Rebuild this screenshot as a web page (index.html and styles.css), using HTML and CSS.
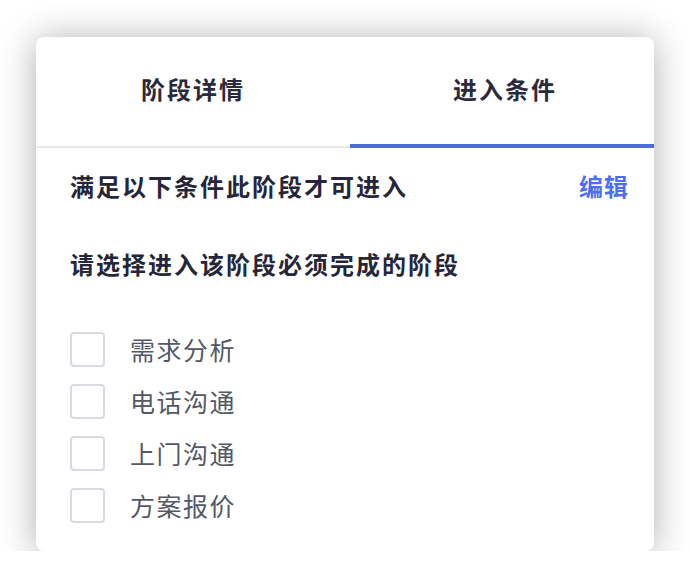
FILE: index.html
```html
<!DOCTYPE html>
<html lang="zh-CN">
<head>
    <meta charset="UTF-8">
    <meta name="viewport" content="width=device-width, initial-scale=1.0">
    <title>进入条件</title>
    <link rel="stylesheet" href="styles.css">
</head>
<body>
    <div class="card">
        <div class="tabs">
            <div class="tab">阶段详情</div>
            <div class="tab active">进入条件</div>
        </div>
        <div class="content">
            <div class="row-head">
                <span class="title">满足以下条件此阶段才可进入</span>
                <a class="edit">编辑</a>
            </div>
            <div class="subtitle">请选择进入该阶段必须完成的阶段</div>
            <ul class="stage-list">
                <li><span class="check"></span>需求分析</li>
                <li><span class="check"></span>电话沟通</li>
                <li><span class="check"></span>上门沟通</li>
                <li><span class="check"></span>方案报价</li>
            </ul>
        </div>
    </div>
</body>
</html>
```

FILE: styles.css
```css
body {
    margin: 0;
    background: #fff;
    font-family: "Noto Sans CJK SC", "Noto Sans", sans-serif;
}
.card {
    width: 618px;
    margin: 37px 0 0 36px;
    background: #fff;
    border-radius: 8px;
    box-shadow: 0 2px 36px rgba(0, 0, 0, 0.32);
    overflow: hidden;
}
.tabs {
    display: flex;
    align-items: flex-end;
    height: 111px;
}
.tab {
    width: 314px;
    height: 109px;
    line-height: 104px;
    text-align: center;
    font-size: 24px;
    font-weight: 700;
    letter-spacing: 2px;
    color: #2a2a3c;
    border-bottom: 2px solid #e8e8ea;
}
.tab.active {
    flex: 1;
    height: 107px;
    padding-left: 6px;
    border-bottom: 4px solid #4a6fd7;
}
.content {
    padding: 17px 25px 20px 34px;
}
.row-head {
    display: flex;
    justify-content: space-between;
    align-items: center;
    height: 40px;
}
.title,
.subtitle {
    font-size: 24px;
    font-weight: 700;
    letter-spacing: 2px;
    color: #26263a;
}
.edit {
    font-size: 24px;
    font-weight: 700;
    letter-spacing: 1px;
    color: #4c6ef2;
    cursor: pointer;
}
.subtitle {
    margin-top: 39px;
    line-height: 40px;
}
.stage-list {
    list-style: none;
    margin: 39px 0 0;
    padding: 0;
}
.stage-list li {
    display: flex;
    align-items: center;
    height: 52px;
    gap: 25px;
    font-size: 25px;
    letter-spacing: 1.5px;
    color: #545866;
}
.check {
    width: 31px;
    height: 31px;
    border: 2px solid #dadae2;
    border-radius: 4px;
}
```
